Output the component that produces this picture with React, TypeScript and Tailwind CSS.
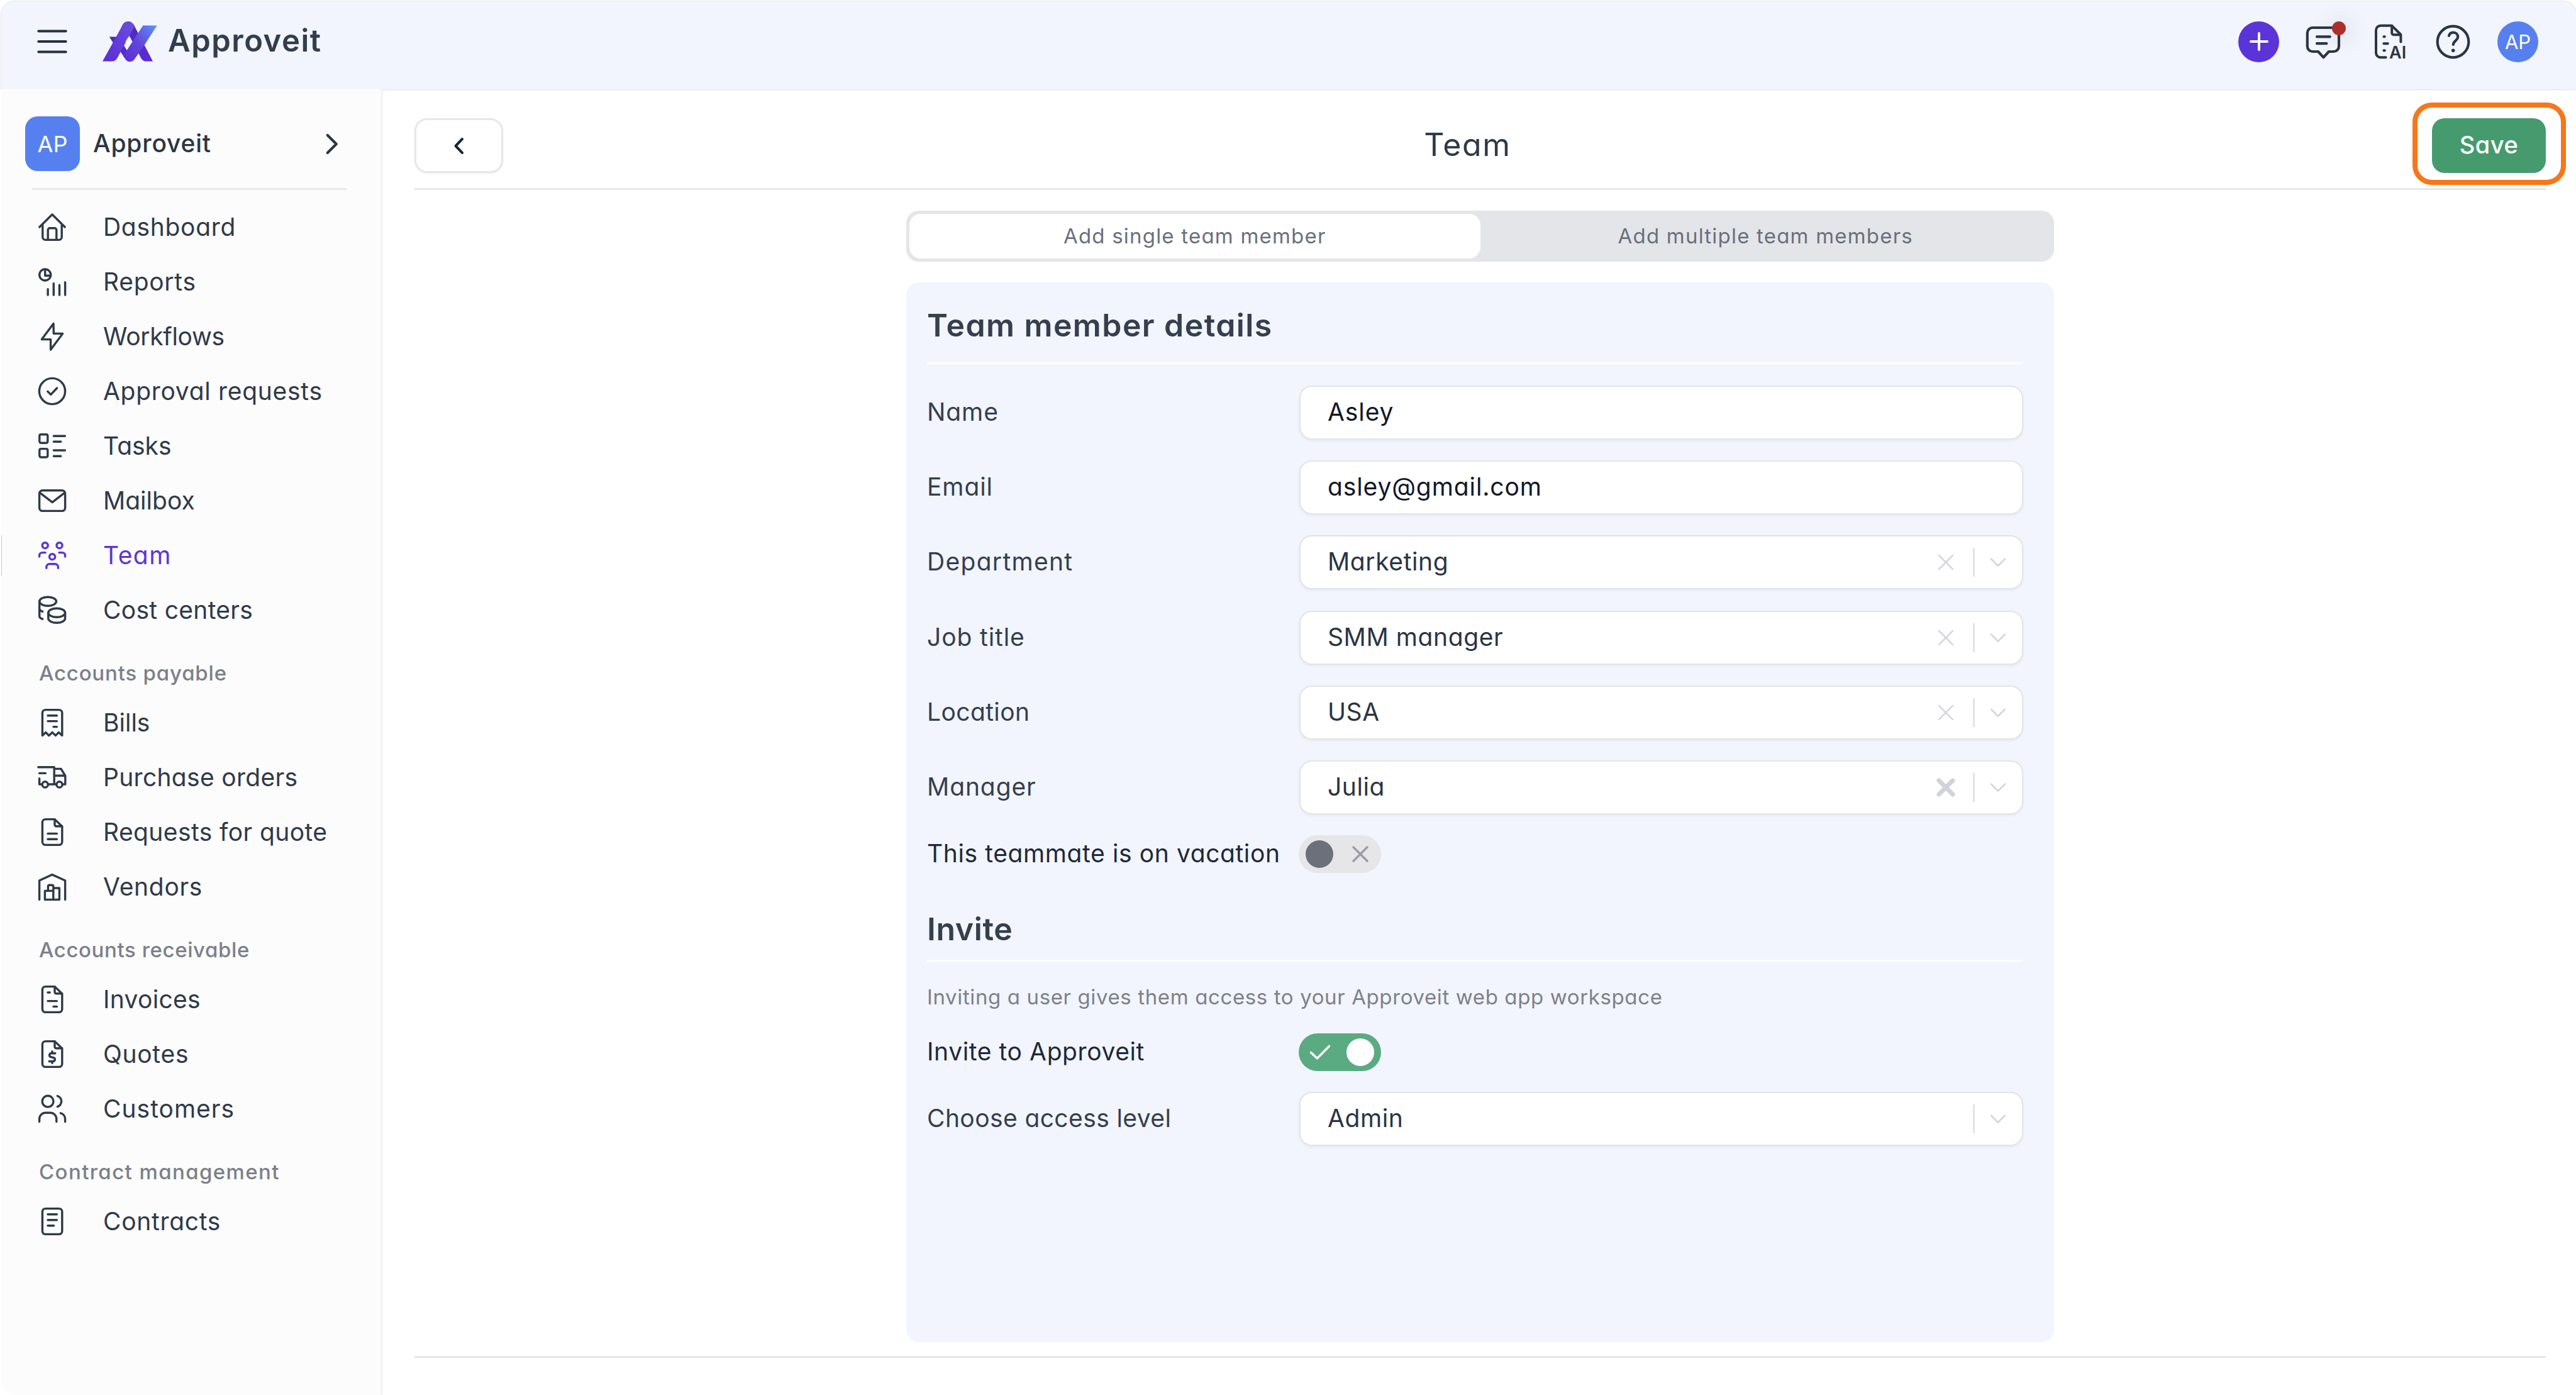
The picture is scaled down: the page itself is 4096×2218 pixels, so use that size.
import type { ReactNode } from "react";

type NavItem = {
  label: string;
  icon: ReactNode;
  active?: boolean;
  tracking?: string;
};

type NavGroup = {
  title?: string;
  tracking?: string;
  items: NavItem[];
};

function Icon({ children }: { children: ReactNode }) {
  return (
    <svg
      viewBox="0 0 48 48"
      className="size-[48px] shrink-0"
      fill="none"
      stroke="currentColor"
      strokeWidth="3.4"
      strokeLinecap="round"
      strokeLinejoin="round"
    >
      {children}
    </svg>
  );
}

// Page outline with a folded corner, shared by all document icons
function FileIcon({ children }: { children: ReactNode }) {
  return (
    <Icon>
      <path d="M28 3.6H13.4a5 5 0 0 0-5 5v30.8a5 5 0 0 0 5 5h21.4a5 5 0 0 0 5-5V15Z" />
      <path d="M28 3.6v8.6a2.6 2.6 0 0 0 2.6 2.6h9" />
      {children}
    </Icon>
  );
}

const groups: NavGroup[] = [
  {
    items: [
      {
        label: "Dashboard",
        icon: (
          <Icon>
            <path d="M3.8 24 24 4 44.2 24M8.8 21v19a4.4 4.4 0 0 0 4.4 4.4h21.6a4.4 4.4 0 0 0 4.4-4.4V21" />
            <path d="M17.2 44V28.6a2.8 2.8 0 0 1 2.8-2.8h8a2.8 2.8 0 0 1 2.8 2.8V44" />
          </Icon>
        )
      },
      {
        label: "Reports",
        icon: (
          <Icon>
            <circle cx="12.7" cy="13" r="9" />
            <path d="M12.7 4.4v9.8h8.6M17.1 35.6v9.4M26.3 26.6V45M35.5 29.2V45M44.6 24.8V45" />
          </Icon>
        )
      },
      {
        label: "Workflows",
        tracking: "tracking-[-0.3px]",
        icon: (
          <Icon>
            <path d="M26 3.4 7.4 28.6h14.2V45L40.6 19.4H26.4Z" />
          </Icon>
        )
      },
      {
        label: "Approval requests",
        icon: (
          <Icon>
            <circle cx="24" cy="24" r="20.6" />
            <path d="m16.8 24.4 5 5 9.8-10.4" />
          </Icon>
        )
      },
      {
        label: "Tasks",
        tracking: "tracking-[0px]",
        icon: (
          <Icon>
            <rect x="3.8" y="5.8" width="13" height="13.4" rx="2.4" />
            <rect x="3.8" y="28.6" width="13" height="13.4" rx="2.4" />
            <path d="M26.4 8.2h18M26.4 17.3h11.4M26.4 31h18M26.4 40.2h11.4" />
          </Icon>
        )
      },
      {
        label: "Mailbox",
        tracking: "tracking-[0px]",
        icon: (
          <Icon>
            <rect x="3.6" y="7.8" width="41" height="32.6" rx="5" />
            <path d="M4.6 11.6 24.2 26.6 43.6 11.6" />
          </Icon>
        )
      },
      {
        label: "Team",
        active: true,
        tracking: "tracking-[1.5px]",
        icon: (
          <Icon>
            <circle cx="12.7" cy="8.2" r="4.5" />
            <circle cx="35.5" cy="8.2" r="4.5" />
            <circle cx="24.1" cy="26.2" r="4.5" />
            <path d="M3.6 26v-1.8a4.6 4.6 0 0 1 4.6-4.6h5M44.6 26v-1.8a4.6 4.6 0 0 0-4.6-4.6h-5M14.8 44.2v-1.8a4.6 4.6 0 0 1 4.6-4.6h9.4a4.6 4.6 0 0 1 4.6 4.6v1.8" />
          </Icon>
        )
      },
      {
        label: "Cost centers",
        tracking: "tracking-[0.3px]",
        icon: (
          <Icon>
            <ellipse cx="17.1" cy="10.2" rx="13.4" ry="7" />
            <path d="M3.7 10.2v23.2c0 2 2 3.8 5 4.8M3.7 21.6c0 2 2 3.8 5 4.8" />
            <ellipse cx="31.2" cy="28.2" rx="13.4" ry="7" />
            <path d="M17.8 28.2v9c0 3.9 6 7 13.4 7s13.4-3.1 13.4-7v-9" />
          </Icon>
        )
      }
    ]
  },
  {
    title: "Accounts payable",
    tracking: "tracking-[0.8px]",
    items: [
      {
        label: "Bills",
        tracking: "tracking-[0px]",
        icon: (
          <Icon>
            <path d="M8.4 44.4V8.6a5 5 0 0 1 5-5h21.4a5 5 0 0 1 5 5v35.8l-5.4-5-5.2 5-5.1-5-5.2 5-5.2-5Z" />
            <path d="M17 12.8h14.4M17 21.6h14.4M26 30.6h5.4" />
          </Icon>
        )
      },
      {
        label: "Purchase orders",
        tracking: "tracking-[0.3px]",
        icon: (
          <Icon>
            <path d="M1.8 7.8h25.4v27.2M3.6 17.4h9.8M3.6 25.6V35h4.2M17.4 35h13.4M40.2 35h4.6V21.4L38 10.4H27.2M27.2 21.2h17.4" />
            <circle cx="12.7" cy="35.4" r="4.6" />
            <circle cx="35.5" cy="35.4" r="4.6" />
          </Icon>
        )
      },
      {
        label: "Requests for quote",
        tracking: "tracking-[0.4px]",
        icon: (
          <FileIcon>
            <path d="M17 26.4h14.4M17 35.2h14.4" />
          </FileIcon>
        )
      },
      {
        label: "Vendors",
        icon: (
          <Icon>
            <path d="M3.6 44.4V14L24 4.6 44.6 14v30.4" />
            <path d="M12.4 30.4h13.4v14H12.4ZM17.4 30.4v-7a2.2 2.2 0 0 1 2.2-2.2h4a2.2 2.2 0 0 1 2.2 2.2v7M25.8 26h9.6v18.4h-9.6Z" />
          </Icon>
        )
      }
    ]
  },
  {
    title: "Accounts receivable",
    tracking: "tracking-[0.6px]",
    items: [
      {
        label: "Invoices",
        tracking: "tracking-[0.3px]",
        icon: (
          <FileIcon>
            <path d="M17 13h3.2M17 26.6h14.4M26 35.4h5.4" />
          </FileIcon>
        )
      },
      {
        label: "Quotes",
        icon: (
          <FileIcon>
            <path d="M28.8 22.8h-6.4a2.9 2.9 0 0 0-.9 5.6l5 1.5a2.9 2.9 0 0 1-.9 5.6h-6.4M24 19.8v2.8M24 35.6v2.6" />
          </FileIcon>
        )
      },
      {
        label: "Customers",
        tracking: "tracking-[1px]",
        icon: (
          <Icon>
            <circle cx="17.1" cy="12.2" r="8.9" />
            <path d="M32.4 3.6a8.9 8.9 0 0 1 0 17M3.6 44.6v-4.4a10 10 0 0 1 10-10h7.2a10 10 0 0 1 10 10v4.4M37.4 30.8a9.6 9.6 0 0 1 7.2 9.4v4.4" />
          </Icon>
        )
      }
    ]
  },
  {
    title: "Contract management",
    tracking: "tracking-[1.4px]",
    items: [
      {
        label: "Contracts",
        icon: (
          <Icon>
            <rect x="8.4" y="3.6" width="31.4" height="40.8" rx="5" />
            <path d="M17 12.8h14.4M17 21.7h14.4M17 30.7h9.6" />
          </Icon>
        )
      }
    ]
  }
];

function Logo() {
  return (
    <svg viewBox="0 0 87 64" className="h-[64px] w-[87px] shrink-0">
      <defs>
        <linearGradient id="logo-stroke" x1="0" y1="1" x2="1" y2="0">
          <stop offset="0" stopColor="#5b2bd6" />
          <stop offset="1" stopColor="#6b4fdf" />
        </linearGradient>
        <linearGradient id="logo-bar" x1="0" y1="1" x2="1" y2="0">
          <stop offset="0" stopColor="#5a2cd5" />
          <stop offset="0.5" stopColor="#6247dc" />
          <stop offset="1" stopColor="#5c97f8" />
        </linearGradient>
        <linearGradient id="logo-back" x1="0" y1="0" x2="0" y2="1">
          <stop offset="0" stopColor="#4c2bb4" />
          <stop offset="1" stopColor="#5b2dd6" />
        </linearGradient>
      </defs>
      <path
        d="M10.8 24.6H20c5 0 7.6 2.4 9.6 6.6L48 61q-5.4 6-10.4.6L28.5 48.3 16.5 33.4Z"
        fill="url(#logo-back)"
      />
      <path
        d="M40.4 0c6 0 9.6 4.4 12 10.6L80 63.4H69c-4.4 0-6.8-2.6-8.6-6.6L38 14Z"
        fill="url(#logo-back)"
      />
      <path
        d="M0 63.4 29.4 10.6C32 4 35 0 40.4 0c5.4 0 8 3.2 10.2 8.2L24.6 56.2c-2.6 4.8-5 7.2-9.6 7.2Z"
        fill="url(#logo-stroke)"
      />
      <path
        d="M64.4 6.6h22.4L67.6 36 51 60c-3.4 5-9 5.2-13.4 1.6L32.8 55Z"
        fill="url(#logo-bar)"
      />
      <path d="m40.8 25.2 4.6 7.8-4 6.6-5-7.2Z" fill="#f2f5fe" />
    </svg>
  );
}

function Header() {
  return (
    <header className="flex h-[140px] items-center rounded-tl-[20px] rounded-tr-[20px] bg-[#f2f5fe] pb-[12px] pl-[57px] pr-[60px] shadow-[0_0_0_1px_#e6e8ee,0_3px_4px_rgba(0,0,0,0.03)]">
      <svg viewBox="0 0 48 48" className="size-[48px]" stroke="#27313f" strokeWidth="4.2" strokeLinecap="round">
        <path d="M2.4 7.5h43.2M2.4 24h43.2M2.4 40.5h43.2" />
      </svg>
      <div className="ml-[56px] flex items-center gap-[17px]">
        <Logo />
        <span className="pb-[3px] text-[49px] font-semibold leading-none tracking-[1.5px] text-[#323e4d]">
          Approveit
        </span>
      </div>

      <div className="ml-auto flex items-center gap-[38px] text-[#2b3644]">
        <button className="flex size-[65px] items-center justify-center rounded-full bg-[#5b34d9]">
          <svg viewBox="0 0 30 30" className="size-[30px]" stroke="#fff" strokeWidth="4" strokeLinecap="round">
            <path d="M15 2v26M2 15h26" />
          </svg>
        </button>
        <div className="relative size-[65px]">
          <span className="absolute left-[45.5px] top-0 size-[22px] rounded-full shadow-[3px_2px_30px_10px_rgba(60,60,50,0.08)]" />
          <svg
            viewBox="0 0 65 65"
            className="relative size-[65px]"
            fill="none"
            stroke="currentColor"
            strokeWidth="4.2"
            strokeLinecap="round"
            strokeLinejoin="round"
          >
            <path d="M15.2 10h33.4a8.4 8.4 0 0 1 8.4 8.4v21.2a8.4 8.4 0 0 1-8.4 8.4H41l-8.6 9.2L24 48h-8.8a8.4 8.4 0 0 1-8.4-8.4V18.4a8.4 8.4 0 0 1 8.4-8.4Z" />
            <path d="M22 24.3h20.8M22 35.2h15.4" />
          </svg>
          <span className="absolute left-[45.5px] top-0 size-[22px] rounded-full bg-[#ab3029]" />
        </div>
        <svg
          viewBox="0 0 65 65"
          className="size-[65px]"
          fill="none"
          stroke="currentColor"
          strokeWidth="4"
          strokeLinecap="round"
          strokeLinejoin="round"
        >
          <path d="M28.6 57.3h-8.4a7.2 7.2 0 0 1-7.2-7.2V14a7.2 7.2 0 0 1 7.2-7.2h18L52.4 21v11.4" />
          <path d="M38.2 7v11.6a2.6 2.6 0 0 0 2.6 2.6h11.4M25.4 24.3h1.4M25.4 35.2h6.4M25.4 46.2h1.4" />
          <text x="34" y="59" fontSize="27" fontWeight="600" stroke="none" fill="currentColor">
            AI
          </text>
        </svg>
        <svg
          viewBox="0 0 65 65"
          className="size-[65px]"
          fill="none"
          stroke="currentColor"
          strokeWidth="4.2"
          strokeLinecap="round"
        >
          <circle cx="32.5" cy="32.5" r="24.8" />
          <path d="M26 22.8c.8-3 3.4-5.2 6.8-5.2 4.2 0 7.4 3 7.4 7 0 5.6-7.4 6.4-7.4 12.4" />
          <circle cx="32.7" cy="46.2" r="2.8" fill="currentColor" stroke="none" />
        </svg>
        <div className="flex size-[65px] items-center justify-center rounded-full bg-[#5680f0] text-[31px] leading-none text-white">
          AP
        </div>
      </div>
    </header>
  );
}

function Sidebar() {
  return (
    <aside className="w-[606px] shrink-0 rounded-bl-[24px] border-r-2 border-[#f0f0f8] bg-[#fcfcfc] pt-[43px] shadow-[2px_0_4px_rgba(0,0,0,0.015)]">
      <div className="flex items-center pl-[38px] pr-[66px]">
        <div className="flex size-[87px] items-center justify-center rounded-[20px] bg-[#5680f0] text-[36px] leading-none text-white">
          AP
        </div>
        <span className="ml-[21px] pb-[3px] text-[39px] font-medium leading-none tracking-[0.8px] text-[#2b3644]">
          Approveit
        </span>
        <svg
          viewBox="0 0 24 36"
          className="ml-auto h-[36px] w-[24px]"
          fill="none"
          stroke="#2b3644"
          strokeWidth="4.2"
          strokeLinecap="round"
          strokeLinejoin="round"
        >
          <path d="m4.8 4 14 14-14 14" />
        </svg>
      </div>
      <div className="ml-[49px] mt-[27px] h-[3px] w-[500px] bg-[#e5e7eb]" />

      <nav className="mt-[15.5px]">
        {groups.map((group, i) => (
          <div key={i}>
            {group.title && (
              <p
                className={`flex h-[92px] items-center pl-[60px] pt-[21px] text-[33px] font-medium leading-none text-[#7b808a] ${group.tracking}`}
              >
                {group.title}
              </p>
            )}
            {group.items.map((item) => (
              <a
                key={item.label}
                className={
                  item.active
                    ? "relative flex h-[87px] items-center gap-[57px] pl-[57px] text-[#5b34d9]"
                    : "relative flex h-[87px] items-center gap-[57px] pl-[57px] text-[#2f3a49]"
                }
              >
                {item.active && <span className="absolute left-0 h-[64px] w-px bg-[#c3c7d6]" />}
                {item.icon}
                <span className={`pb-[2px] text-[39px] leading-none ${item.tracking ?? "tracking-[0.7px]"}`}>
                  {item.label}
                </span>
              </a>
            ))}
          </div>
        ))}
      </nav>
    </aside>
  );
}

function ClearIcon({ bold }: { bold?: boolean }) {
  return (
    <svg
      viewBox="0 0 32 32"
      className="size-[32px]"
      stroke="#d1d3d9"
      strokeWidth={bold ? 7 : 2.4}
      strokeLinecap="round"
    >
      <path d="m5 5 22 22M27 5 5 27" />
    </svg>
  );
}

type FieldProps = {
  label: string;
  value: string;
  select?: boolean;
  clear?: "thin" | "bold";
  tracking?: string;
};

function Field({ label, value, select, clear, tracking = "tracking-[0.9px]" }: FieldProps) {
  return (
    <div className="flex h-[86px] items-center">
      <span className={`w-[592px] pb-[3px] text-[39px] leading-none text-[#353f4e] ${tracking}`}>{label}</span>
      <div className="flex h-full w-[1151px] items-center rounded-[20px] border-2 border-[#e3e4e9] bg-white pl-[43px] pr-[23px] shadow-[0_2px_4px_rgba(0,0,0,0.05)]">
        <span
          className={
            select
              ? "grow pb-[3px] text-[39px] leading-none tracking-[0.6px] text-[#2b3443]"
              : "grow pb-[3px] text-[39px] leading-none tracking-[0.9px] text-[#111827]"
          }
        >
          {value}
        </span>
        {clear && <ClearIcon bold={clear === "bold"} />}
        {select && (
          <>
            <span className="ml-[27px] h-[46px] w-[3px] bg-[#e3e4e9]" />
            <svg
              viewBox="0 0 30 30"
              className="ml-[22px] size-[30px]"
              fill="none"
              stroke="#d1d3d9"
              strokeWidth="2.4"
              strokeLinecap="round"
              strokeLinejoin="round"
            >
              <path d="m4 9.6 11 11 11-11" />
            </svg>
          </>
        )}
      </div>
    </div>
  );
}

function Toggle({ label, on }: { label: string; on?: boolean }) {
  return (
    <div className="flex h-[60px] items-center">
      <span className="w-[591px] whitespace-nowrap pb-[2px] text-[39px] leading-none tracking-[0.6px] text-[#1f2937]">
        {label}
      </span>
      {on ? (
        <div className="flex h-[60px] w-[131px] items-center justify-between rounded-full bg-[#5bab82] pl-[16px] pr-[11px]">
          <svg
            viewBox="0 0 36 28"
            className="h-[28px] w-[36px]"
            fill="none"
            stroke="#fff"
            strokeWidth="3.6"
            strokeLinecap="round"
            strokeLinejoin="round"
          >
            <path d="m3.4 14.4 10 9.4L32.4 4.4" />
          </svg>
          <span className="size-[44px] rounded-full bg-white" />
        </div>
      ) : (
        <div className="flex h-[60px] w-[131px] items-center justify-between rounded-full bg-[#e6e6e9] pl-[11px] pr-[18px]">
          <span className="size-[44px] rounded-full bg-[#6c707b]" />
          <svg viewBox="0 0 30 30" className="size-[30px]" stroke="#999ca5" strokeWidth="3.4" strokeLinecap="round">
            <path d="m4 4 22 22M26 4 4 26" />
          </svg>
        </div>
      )}
    </div>
  );
}

export default function App() {
  return (
    <div className="h-[2218px] w-[4096px] overflow-hidden bg-white pl-[2px] pt-[2px] font-['Inter',sans-serif] [font-feature-settings:'cv11']">
      <Header />
      <div className="flex h-[2076px]">
        <Sidebar />
        <main className="grow pl-[51px] pr-[48px] pt-[46px]">
          <div className="flex items-center justify-between">
            <button className="flex h-[87px] w-[141px] items-center justify-center rounded-[20px] border-[3px] border-[#e5e7eb] bg-white shadow-[0_2px_4px_rgba(0,0,0,0.04)]">
              <svg
                viewBox="0 0 20 32"
                className="h-[32px] w-[20px]"
                fill="none"
                stroke="#1c2533"
                strokeWidth="4"
                strokeLinecap="round"
                strokeLinejoin="round"
              >
                <path d="M15 5 4.5 16 15 27" />
              </svg>
            </button>
            <h1 className="pb-[3px] text-[50px] leading-none tracking-[1.6px] text-[#2f3a49]">Team</h1>
            <div className="relative">
              <button className="flex h-[87px] w-[181px] items-center justify-center rounded-[20px] bg-[#469b6e] pb-[3px] text-[38px] font-medium leading-none tracking-[0.5px] text-white">
                Save
              </button>
              <span className="absolute -bottom-[19px] -left-[31px] -right-[32px] -top-[25px] rounded-[31px] border-8 border-[#f97619]" />
            </div>
          </div>
          <div className="mt-[24px] h-[3px] bg-[#e5e7eb]" />

          <div className="mx-auto mt-[33px] flex h-[81px] w-[1825px] rounded-[20px] bg-[#e4e5e9] p-[5px] text-[33px] leading-none tracking-[1.2px] text-[#69707c]">
            <div className="flex flex-1 items-center justify-center rounded-[18px] bg-white pb-px">
              Add single team member
            </div>
            <div className="flex flex-1 items-center justify-center pb-px">Add multiple team members</div>
          </div>

          <section className="mx-auto mt-[33px] h-[1685px] w-[1825px] rounded-[20px] bg-[#f2f5fe] pl-[33px] pr-[49px]">
            <h2 className="flex h-[130px] items-center border-b-[3px] border-white pt-[8px] text-[50px] font-semibold leading-none tracking-[1.4px] text-[#353f4e]">
              Team member details
            </h2>
            <div className="mt-[33.5px] flex flex-col gap-[33.4px]">
              <Field label="Name" value="Asley" />
              <Field label="Email" value="asley@gmail.com" />
              <Field label="Department" value="Marketing" tracking="tracking-[1.3px]" select clear="thin" />
              <Field label="Job title" value="SMM manager" select clear="thin" />
              <Field label="Location" value="USA" tracking="tracking-[0.4px]" select clear="thin" />
              <Field label="Manager" value="Julia" select clear="bold" />
            </div>
            <div className="mt-[32.5px]">
              <Toggle label="This teammate is on vacation" />
            </div>

            <h2 className="flex h-[141px] items-center border-b-[3px] border-white pt-[41px] text-[50px] font-semibold leading-none tracking-[0.6px] text-[#353f4e]">
              Invite
            </h2>
            <p className="flex h-[114px] items-center text-[33px] leading-none tracking-[0.62px] text-[#7d818a]">
              Inviting a user gives them access to your Approveit web app workspace
            </p>
            <Toggle label="Invite to Approveit" on />
            <div className="mt-[33px]">
              <Field label="Choose access level" value="Admin" tracking="tracking-[0.4px]" select />
            </div>
          </section>
          <div className="mt-[22px] h-[3px] bg-[#e5e7eb]" />
        </main>
      </div>
    </div>
  );
}
